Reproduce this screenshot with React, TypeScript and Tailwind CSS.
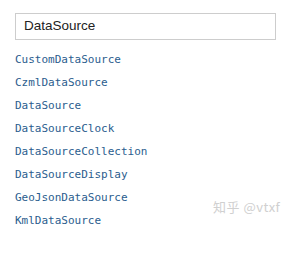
const items = [
  "CustomDataSource",
  "CzmlDataSource",
  "DataSource",
  "DataSourceClock",
  "DataSourceCollection",
  "DataSourceDisplay",
  "GeoJsonDataSource",
  "KmlDataSource",
];

export default function App() {
  return (
    <div className="relative w-[292px] h-[253px] bg-white overflow-hidden">
      <div className="pl-[15px] pt-[13px]">
        <div className="w-[261px] h-[27px] border border-[#cdcdcd] flex items-center pl-[8px] text-[13.5px] text-[#222] font-['Liberation_Sans',Arial,sans-serif]">
          DataSource
        </div>
        <ul className="mt-[13px] flex flex-col gap-[9px]">
          {items.map((name) => (
            <li key={name} className="h-[14px] leading-[14px] text-[11px] text-[#2b5d8e] font-['DejaVu_Sans_Mono',monospace]">
              {name}
            </li>
          ))}
        </ul>
      </div>
      <div className="absolute left-[213px] top-[197px] text-[13px] tracking-[0.5px] text-[#d0d0d0] font-['Noto_Sans_CJK_SC',sans-serif]">
        知乎 @vtxf
      </div>
    </div>
  );
}
